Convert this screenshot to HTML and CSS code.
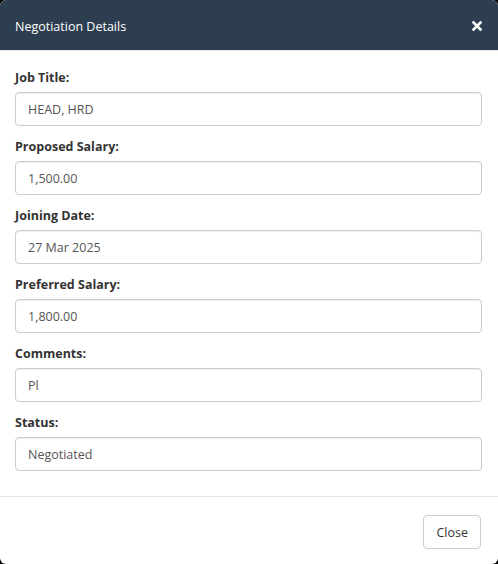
FILE: index.html
```html
<!DOCTYPE html>
<html>
<head>
<meta charset="utf-8">
<link rel="stylesheet" href="styles.css">
</head>
<body>
<div class="modal">
  <div class="modal-header">
    <span class="modal-title">Negotiation Details</span>
    <button class="close-x" aria-label="Close">
      <svg width="10" height="10" viewBox="0 0 10 10"><path d="M1.5 1.5 L8.5 8.5 M8.5 1.5 L1.5 8.5" stroke="#fff" stroke-width="2.6" stroke-linecap="square"/></svg>
    </button>
  </div>
  <div class="modal-body">
    <div class="group"><label>Job Title:</label><div class="field">HEAD, HRD</div></div>
    <div class="group"><label>Proposed Salary:</label><div class="field">1,500.00</div></div>
    <div class="group"><label>Joining Date:</label><div class="field">27 Mar 2025</div></div>
    <div class="group"><label>Preferred Salary:</label><div class="field">1,800.00</div></div>
    <div class="group"><label>Comments:</label><div class="field">Pl</div></div>
    <div class="group"><label>Status:</label><div class="field">Negotiated</div></div>
  </div>
  <div class="modal-footer">
    <button class="btn">Close</button>
  </div>
</div>
</body>
</html>
```
FILE: styles.css
```css
html, body {
  margin: 0;
  padding: 0;
  background: #000;
}
body {
  font-family: "Open Sans", "Noto Sans", sans-serif;
  font-size: 12.5px;
  color: #333;
}
.modal {
  width: 498px;
  height: 564px;
  background: #fff;
  border-radius: 6px;
  overflow: hidden;
  display: flex;
  flex-direction: column;
}
.modal-header {
  height: 50px;
  background: #2d3e50;
  border-bottom: 1px solid #e5e5e5;
  display: flex;
  align-items: center;
  justify-content: space-between;
  padding: 0 16px 0 15px;
  box-sizing: content-box;
}
.modal-title {
  color: #fff;
  font-size: 12.5px;
  margin-top: 3px;
}
.close-x {
  background: none;
  border: 0;
  padding: 0;
  width: 10px;
  height: 10px;
  display: flex;
  margin-top: 2px;
}
.modal-body {
  padding: 16px 16px 5px 15px;
  flex: 1;
}
.group {
  margin-bottom: 10px;
}
.group label {
  display: block;
  font-weight: bold;
  line-height: 20px;
  padding-top: 1px;
  margin-bottom: 4px;
  color: #333;
}
.field {
  height: 34px;
  box-sizing: border-box;
  border: 1px solid #ccc;
  border-radius: 4px;
  padding: 0 12px;
  display: flex;
  align-items: center;
  color: #555;
  box-shadow: inset 0 1px 1px rgba(0,0,0,0.075);
}
.modal-footer {
  border-top: 1px solid #e5e5e5;
  padding: 18px 17px 15px 15px;
  display: flex;
  justify-content: flex-end;
}
.btn {
  height: 34px;
  box-sizing: border-box;
  padding: 0 12px;
  border: 1px solid #ccc;
  border-radius: 4px;
  background: #fff;
  color: #333;
  font-family: inherit;
  font-size: 12.5px;
}
```
